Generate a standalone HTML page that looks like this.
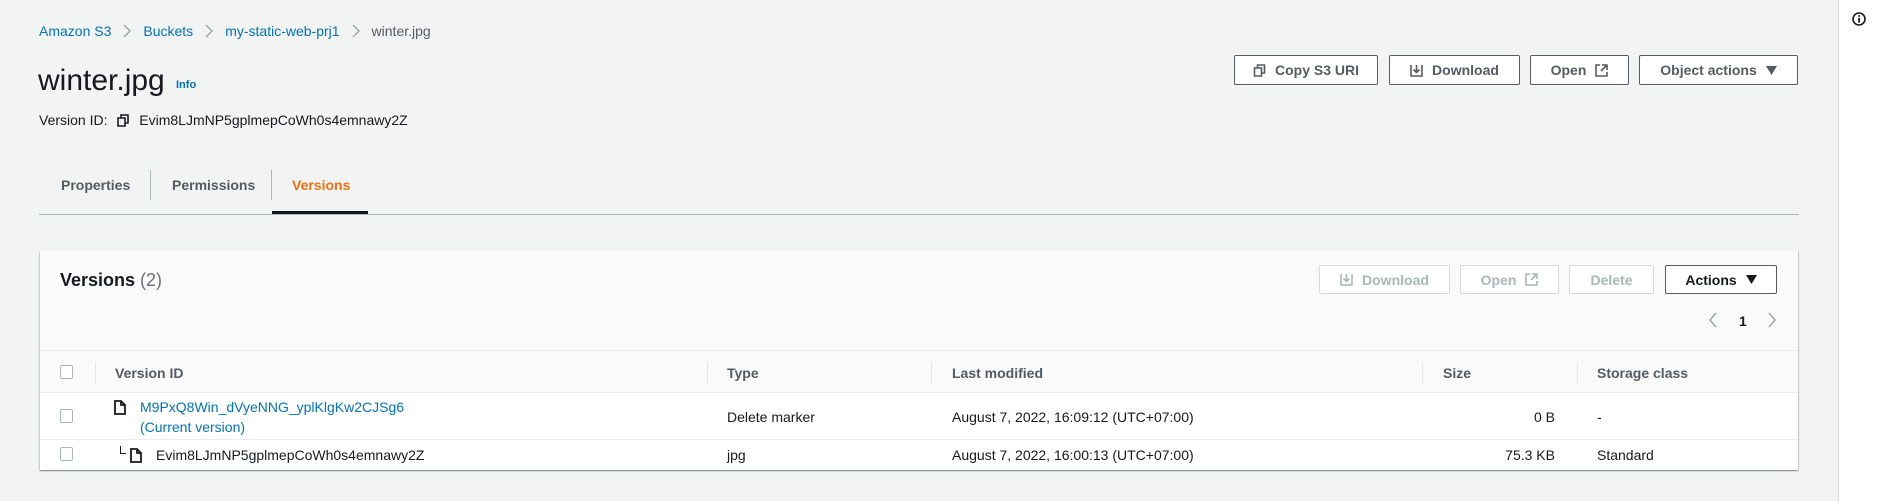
<!DOCTYPE html>
<html><head><meta charset="utf-8"><style>
*{box-sizing:border-box;margin:0;padding:0}
body{width:1879px;height:501px;background:#f2f3f3;font-family:"Liberation Sans",Arial,sans-serif;color:#16191f;position:relative;overflow:hidden;font-size:14px}
.a{position:absolute;white-space:nowrap}
.lnk{color:#0073bb}
.btn{position:absolute;border:1px solid #545b64;background:#fff;border-radius:2px;color:#545b64;font-weight:bold;font-size:14px;display:flex;align-items:center;justify-content:center;gap:9px}
.dis{border-color:#d5dbdb;color:#aab7b8}
.cb{position:absolute;width:13px;height:14px;border:1px solid #aab7b8;border-radius:2px;background:#fff}
.th{font-weight:bold;color:#545b64}
.sep{position:absolute;width:1px;background:#e4e7e7}
.chev{display:inline-block;margin:0 12px;color:#879596}
</style></head><body>
<div class="a" style="left:1838px;top:0;width:41px;height:501px;background:#fff;border-left:1px solid #d5dbdb"></div>
<svg class="a" style="left:1852px;top:12px" width="14" height="14" viewBox="0 0 14 14"><circle cx="7" cy="7" r="6" fill="none" stroke="#16191f" stroke-width="1.6"/><rect x="6.2" y="6" width="1.8" height="4.5" fill="#16191f"/><rect x="6.2" y="3.2" width="1.8" height="1.6" fill="#16191f"/></svg>

<div class="a" style="left:39px;top:23px;font-size:14px;color:#545b64"><span class="lnk">Amazon S3</span><svg class="chev" width="8" height="14" viewBox="0 0 8 14" style="vertical-align:-2px"><path d="M1 1l6 6-6 6" fill="none" stroke="#879596" stroke-width="1.2"/></svg><span class="lnk">Buckets</span><svg class="chev" width="8" height="14" viewBox="0 0 8 14" style="vertical-align:-2px"><path d="M1 1l6 6-6 6" fill="none" stroke="#879596" stroke-width="1.2"/></svg><span class="lnk">my-static-web-prj1</span><svg class="chev" width="8" height="14" viewBox="0 0 8 14" style="vertical-align:-2px"><path d="M1 1l6 6-6 6" fill="none" stroke="#879596" stroke-width="1.2"/></svg>winter.jpg</div>
<div class="a" style="left:38px;top:64px;font-size:30px">winter.jpg</div>
<div class="a lnk" style="left:176px;top:79px;font-size:11px;font-weight:bold">Info</div>
<div class="a" style="left:39px;top:112px;font-size:14px">Version ID: <svg width="12" height="13" viewBox="0 0 12 13" style="margin:0 6px;vertical-align:-2px"><path d="M1 4h7v8H1z M4 4V1h7v8H8" fill="none" stroke="#16191f" stroke-width="1.6"/></svg> Evim8LJmNP5gplmepCoWh0s4emnawy2Z</div>

<div class="btn" style="left:1234px;top:55px;width:144px;height:30px"><svg width="13" height="13" viewBox="0 0 12 13"><path d="M1 4h7v8H1z M4 4V1h7v8H8" fill="none" stroke="#545b64" stroke-width="1.6"/></svg>Copy S3 URI</div>
<div class="btn" style="left:1389px;top:55px;width:131px;height:30px"><svg width="13" height="13" viewBox="0 0 13 13"><path d="M1 1v11h11V1 M4 1v0 M6.5 1v7 M3.5 5.5l3 3 3-3" fill="none" stroke="#545b64" stroke-width="1.6"/></svg>Download</div>
<div class="btn" style="left:1530px;top:55px;width:99px;height:30px">Open <svg width="13" height="13" viewBox="0 0 13 13"><path d="M5 1H1v11h11V8 M7 1h5v5 M12 1L6 7" fill="none" stroke="#545b64" stroke-width="1.6"/></svg></div>
<div class="btn" style="left:1639px;top:55px;width:159px;height:30px">Object actions <svg width="11" height="9" viewBox="0 0 11 9"><path d="M0 0h11L5.5 9z" fill="#545b64"/></svg></div>

<div class="a th" style="left:61px;top:177px;font-size:14px">Properties</div>
<div class="a" style="left:150px;top:170px;width:1px;height:30px;background:#aab7b8"></div>
<div class="a th" style="left:172px;top:177px;font-size:14px">Permissions</div>
<div class="a" style="left:271px;top:170px;width:1px;height:30px;background:#aab7b8"></div>
<div class="a" style="left:292px;top:177px;font-size:14px;font-weight:bold;color:#ec7211">Versions</div>
<div class="a" style="left:39px;top:214px;width:1760px;height:1px;background:#aab7b8"></div>
<div class="a" style="left:272px;top:211px;width:96px;height:3px;background:#16191f"></div>

<div class="a" style="left:40px;top:251px;width:1758px;height:219px;background:#fafafa;box-shadow:0 1px 1px rgba(0,28,36,.3),1px 1px 1px rgba(0,28,36,.15),-1px 1px 1px rgba(0,28,36,.15)"></div>
<div class="a" style="left:40px;top:350px;width:1758px;height:119px;background:#fff"></div>
<div class="a" style="left:40px;top:350px;width:1758px;height:43px;background:#fafafa;border-top:1px solid #eaeded;border-bottom:1px solid #eaeded"></div>
<div class="a" style="left:40px;top:439px;width:1758px;height:1px;background:#eaeded"></div>

<div class="a" style="left:60px;top:270px;font-size:18px;font-weight:bold">Versions <span style="font-weight:normal;color:#687078">(2)</span></div>
<div class="btn dis" style="left:1319px;top:265px;width:131px;height:29px"><svg width="13" height="13" viewBox="0 0 13 13"><path d="M1 1v11h11V1 M6.5 1v7 M3.5 5.5l3 3 3-3" fill="none" stroke="#aab7b8" stroke-width="1.6"/></svg>Download</div>
<div class="btn dis" style="left:1460px;top:265px;width:99px;height:29px">Open <svg width="13" height="13" viewBox="0 0 13 13"><path d="M5 1H1v11h11V8 M7 1h5v5 M12 1L6 7" fill="none" stroke="#aab7b8" stroke-width="1.6"/></svg></div>
<div class="btn dis" style="left:1569px;top:265px;width:85px;height:29px">Delete</div>
<div class="btn" style="left:1665px;top:265px;width:112px;height:29px;color:#16191f">Actions <svg width="11" height="9" viewBox="0 0 11 9"><path d="M0 0h11L5.5 9z" fill="#16191f"/></svg></div>
<svg class="a" style="left:1709px;top:312px" width="8" height="16" viewBox="0 0 8 16"><path d="M7 1L1 8l6 7" fill="none" stroke="#879596" stroke-width="1.3"/></svg>
<div class="a" style="left:1739px;top:313px;font-weight:bold;font-size:14px">1</div>
<svg class="a" style="left:1768px;top:312px" width="8" height="16" viewBox="0 0 8 16"><path d="M1 1l6 7-6 7" fill="none" stroke="#879596" stroke-width="1.3"/></svg>

<div class="cb" style="left:60px;top:365px"></div>
<div class="sep" style="left:95px;top:362px;height:22px"></div>
<div class="a th" style="left:115px;top:365px">Version ID</div>
<div class="sep" style="left:707px;top:362px;height:22px"></div>
<div class="a th" style="left:727px;top:365px">Type</div>
<div class="sep" style="left:931px;top:362px;height:22px"></div>
<div class="a th" style="left:952px;top:365px">Last modified</div>
<div class="sep" style="left:1422px;top:362px;height:22px"></div>
<div class="a th" style="left:1443px;top:365px">Size</div>
<div class="sep" style="left:1577px;top:362px;height:22px"></div>
<div class="a th" style="left:1597px;top:365px">Storage class</div>

<div class="cb" style="left:60px;top:409px"></div>
<svg class="a" style="left:114px;top:400px" width="12" height="15" viewBox="0 0 12 15"><path d="M1 1h6l4 4v9H1z M7 1v4h4" fill="none" stroke="#16191f" stroke-width="1.8"/></svg>
<div class="a lnk" style="left:140px;top:399px">M9PxQ8Win_dVyeNNG_yplKlgKw2CJSg6</div>
<div class="a lnk" style="left:140px;top:419px">(Current version)</div>
<div class="a" style="left:727px;top:409px">Delete marker</div>
<div class="a" style="left:952px;top:409px">August 7, 2022, 16:09:12 (UTC+07:00)</div>
<div class="a" style="left:1443px;top:409px;width:112px;text-align:right">0 B</div>
<div class="a" style="left:1597px;top:409px">-</div>

<div class="cb" style="left:60px;top:447px"></div>
<div class="a" style="left:120px;top:446px;width:6px;height:8px;border-left:1.5px solid #16191f;border-bottom:1.5px solid #16191f"></div>
<svg class="a" style="left:130px;top:448px" width="12" height="15" viewBox="0 0 12 15"><path d="M1 1h6l4 4v9H1z M7 1v4h4" fill="none" stroke="#16191f" stroke-width="1.8"/></svg>
<div class="a" style="left:156px;top:447px">Evim8LJmNP5gplmepCoWh0s4emnawy2Z</div>
<div class="a" style="left:727px;top:447px">jpg</div>
<div class="a" style="left:952px;top:447px">August 7, 2022, 16:00:13 (UTC+07:00)</div>
<div class="a" style="left:1443px;top:447px;width:112px;text-align:right">75.3 KB</div>
<div class="a" style="left:1597px;top:447px">Standard</div>
</body></html>
